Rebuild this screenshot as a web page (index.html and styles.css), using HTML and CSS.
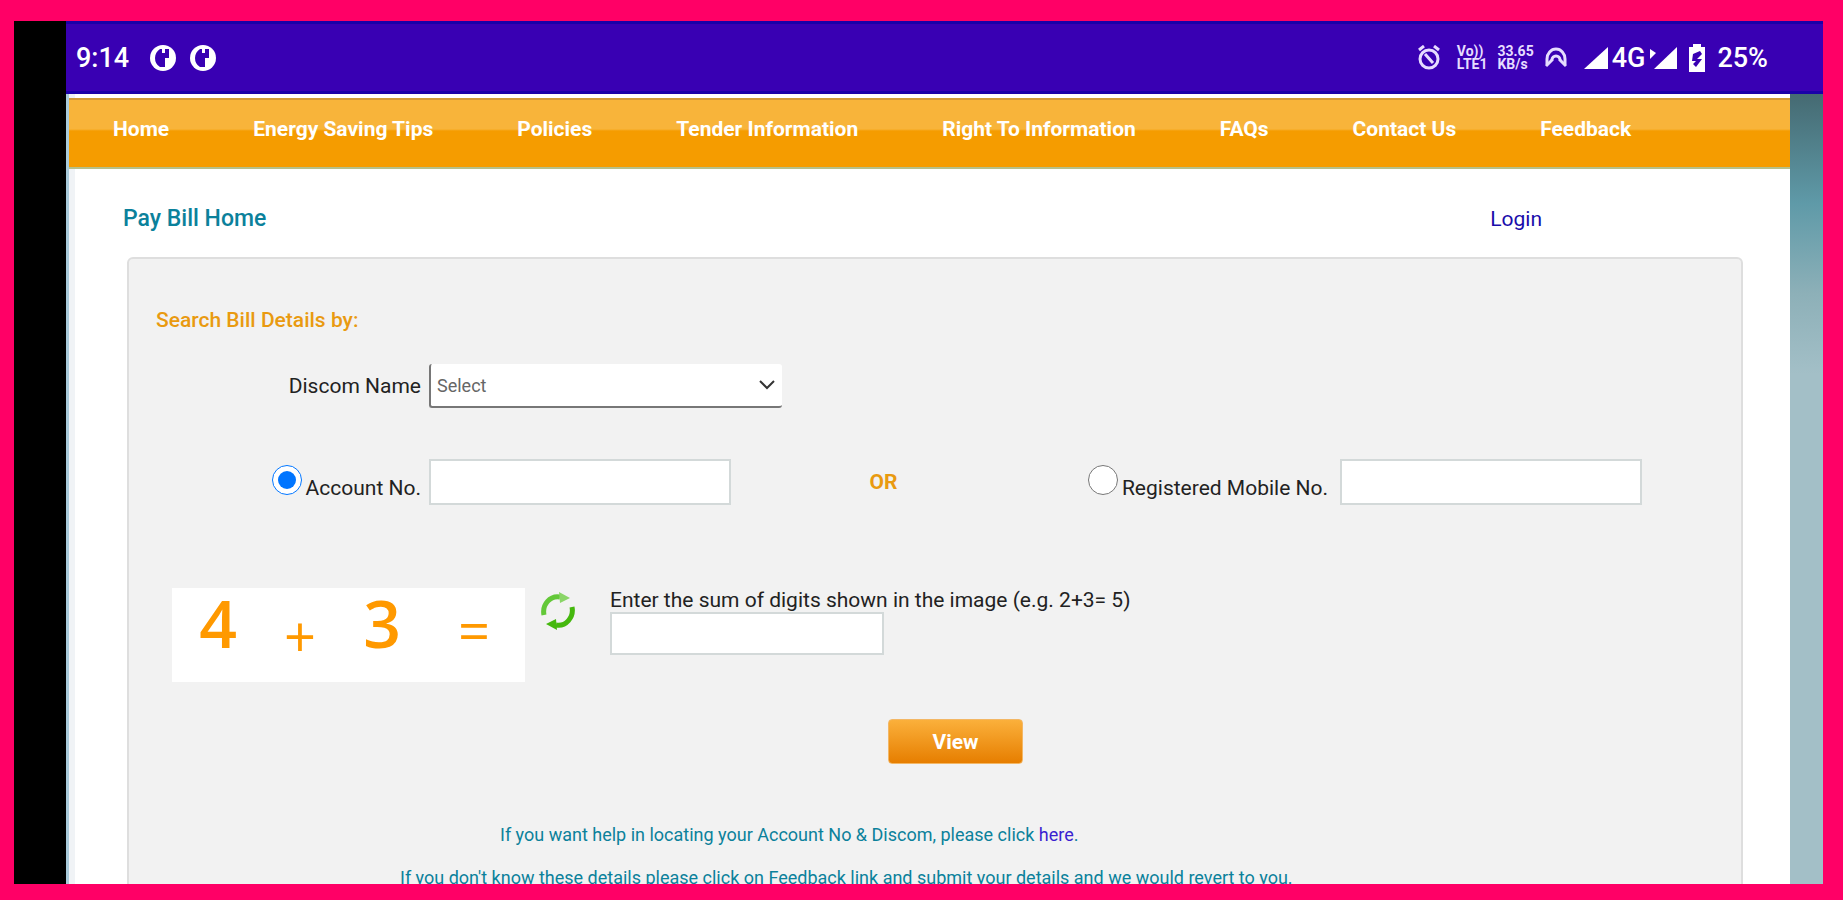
FILE: index.html
```html
<!DOCTYPE html>
<html lang="en">
  <head>
    <meta charset="UTF-8" />
    <meta name="viewport" content="width=device-width, initial-scale=1.0" />
    <title>Pay Bill Home</title>
    <link rel="stylesheet" href="styles.css">
  </head>
  <body>
    <div class="screen">
      <header class="status-bar">
        <div class="status-left">
          <span class="status-text clock">9:14</span>
          <svg class="app-icon" viewBox="0 0 28 28">
            <circle cx="14" cy="14" r="13" fill="#fff" />
            <path d="M11 5h9v9h-4v9h-5a9 10 0 0 1-5-9c0-4 2-7 5-9z" fill="#3900b3" />
            <path d="M13 4h3v5h-3z" fill="#fff" />
          </svg>
          <svg class="app-icon" viewBox="0 0 28 28">
            <circle cx="14" cy="14" r="13" fill="#fff" />
            <path d="M11 5h9v9h-4v9h-5a9 10 0 0 1-5-9c0-4 2-7 5-9z" fill="#3900b3" />
            <path d="M13 4h3v5h-3z" fill="#fff" />
          </svg>
        </div>
        <div class="status-right">
          <svg class="alarm" width="24" height="26" viewBox="0 0 24 26" fill="none" stroke="#e6dcff" stroke-width="3">
            <circle cx="12" cy="14" r="9" />
            <path d="M8 9l8 9M2 5l5-4M22 5l-5-4" />
          </svg>
          <span class="tiny">Vo))<br>LTE1</span>
          <span class="tiny">33.65<br>KB/s</span>
          <svg class="hotspot" width="24" height="24" viewBox="0 0 24 24" fill="none" stroke="#e6dcff" stroke-width="3">
            <path d="M3 18v-5a9 10 0 0 1 18 0v5M8 15v-1a4 4 0 0 1 8 0v1" />
            <path d="M2 20l6-6M22 20l-6-6" />
          </svg>
          <svg width="24" height="24" viewBox="0 0 24 24"><path d="M24 1v22H0z" fill="#fff" /></svg>
          <span class="status-text network">4G</span>
          <svg class="signal" width="28" height="24" viewBox="0 0 28 24" fill="#fff">
            <path d="M28 1v22H5z" />
            <path d="M1 3l6 4-6 6z" />
          </svg>
          <svg class="battery" width="20" height="30" viewBox="0 0 20 30">
            <path d="M6 1h8v3h4v25H2V4h4z" fill="#fff" />
            <path d="M6 11l7-3 2 3-5 5h5l-6 8-3-3 3-3H5z" fill="#3900b3" />
          </svg>
          <span class="status-text">25%</span>
        </div>
      </header>

      <div class="viewport">
        <div class="page">
          <nav class="main-nav">
            <a href="#">Home</a>
            <a href="#">Energy Saving Tips</a>
            <a href="#">Policies</a>
            <a href="#">Tender Information</a>
            <a href="#">Right To Information</a>
            <a href="#">FAQs</a>
            <a href="#">Contact Us</a>
            <a href="#">Feedback</a>
          </nav>

          <div class="title-row">
            <h1>Pay Bill Home</h1>
            <a href="#" class="login">Login</a>
          </div>

          <form class="panel">
            <h2>Search Bill Details by:</h2>

            <div class="field">
              <label class="field-label" for="discom">Discom Name</label>
              <select id="discom" class="discom">
                <option>Select</option>
              </select>
            </div>

            <div class="search-row">
              <div class="field">
                <div class="field-label">
                  <input type="radio" name="search-by" id="by-account" checked />
                  <label for="by-account">Account No.</label>
                </div>
                <input type="text" class="text-box" aria-label="Account No." />
              </div>
              <span class="or">OR</span>
              <div class="field field-mobile">
                <div class="field-label">
                  <input type="radio" name="search-by" id="by-mobile" />
                  <label for="by-mobile">Registered Mobile No.</label>
                </div>
                <input type="text" class="text-box" aria-label="Registered Mobile No." />
              </div>
            </div>

            <div class="captcha-row">
              <div class="captcha">
                <span class="digit">4</span>
                <span class="sign">+</span>
                <span class="digit">3</span>
                <span class="sign equals">=</span>
              </div>
              <button type="button" class="refresh" aria-label="Refresh">
                <svg width="36" height="38" viewBox="0 0 36 38" fill="none" stroke-width="5">
                  <path d="M4 23A14 15 0 0 1 20 5" stroke="#63c838" />
                  <path d="M19 0l11 6-10 5z" fill="#8ad567" />
                  <path d="M32 15A14 15 0 0 1 16 33" stroke="#45b80e" />
                  <path d="M17 38L6 32l10-5z" fill="#45b80e" />
                </svg>
              </button>
              <div class="answer">
                <label for="sum">Enter the sum of digits shown in the image (e.g. 2+3= 5)</label>
                <input type="text" id="sum" class="text-box" />
              </div>
            </div>

            <button type="button" class="view-btn">View</button>

            <p class="help help-locate">If you want help in locating your Account No &amp; Discom, please click <a href="#">here</a>.</p>
            <p class="help">If you don't know these details please click on Feedback link and submit your details and we would revert to you.</p>
          </form>
        </div>
      </div>
    </div>
  </body>
</html>
```

FILE: styles.css
```css
* {
  box-sizing: border-box;
}

body {
  margin: 0;
  height: 100vh;
  padding: 21px 20px 16px 14px;
  background-color: #ff0066;
  font-family: Roboto, "Liberation Sans", sans-serif;
  font-size: 21px;
  line-height: 24px;
  color: #222;
  overflow: hidden;
}

h1,
h2,
p {
  margin: 0;
}

a {
  text-decoration: none;
}

.screen {
  height: 100%;
  display: flex;
  flex-direction: column;
  border-left: 52px solid #000;
  overflow: hidden;
}

/* phone status bar */
.status-bar {
  flex: none;
  height: 73px;
  padding: 0 55px 0 10px;
  display: flex;
  justify-content: space-between;
  align-items: center;
  background-color: #3900b3;
  border-top: 3px solid #1a00a8;
  border-bottom: 3px solid #1a00a8;
}

.status-left,
.status-right {
  display: flex;
  align-items: center;
}

.status-text {
  color: #fff;
  font-size: 27px;
  font-weight: 500;
  line-height: 32px;
}

.clock {
  margin-right: 20px;
}

.app-icon {
  width: 28px;
  height: 28px;
  margin-right: 12px;
}

.alarm {
  margin-right: 16px;
}

.tiny {
  margin-right: 10px;
  color: #e6dcff;
  font-size: 14px;
  font-weight: 700;
  line-height: 13px;
}

.hotspot {
  margin-right: 16px;
}

.network {
  margin: 0 4px;
}

.signal {
  margin-right: 10px;
}

.battery {
  margin-right: 10px;
}

/* web page */
.viewport {
  flex: 1;
  min-height: 0;
  padding-right: 33px;
  background: linear-gradient(#456a72, #5f9aa8 110px, #8db0b8 200px, #a3bfc7 280px);
}

.page {
  height: 100%;
  padding-top: 4px;
  background-color: #fff;
  border-left: 3px solid #a9cbdb;
  box-shadow: inset 6px 0 #f0f3f6;
}

.main-nav {
  height: 71px;
  padding: 17px 44px 0;
  display: flex;
  gap: 84px;
  background: linear-gradient(#f8b43a 29px, #f59c00 31px);
  border-top: 2px solid #d09a38;
  border-bottom: 2px solid #b5c08a;
}

.main-nav a {
  color: #fff;
  font-weight: 700;
  white-space: nowrap;
}

.title-row {
  padding: 38px 248px 26px 54px;
  display: flex;
  justify-content: space-between;
}

h1 {
  color: #0b819b;
  font-size: 23px;
  font-weight: 500;
}

.login {
  color: #1a0dab;
}

.panel {
  margin: 0 47px 0 58px;
  padding-top: 49px;
  min-height: 640px;
  background-color: #f2f2f2;
  border: 2px solid #dedede;
  border-radius: 6px;
}

h2 {
  margin: 0 0 32px 27px;
  color: #e99a10;
  font-size: 21px;
  font-weight: 500;
}

.field {
  display: flex;
  align-items: center;
  gap: 8px;
}

.field-mobile {
  gap: 12px;
}

.field-label {
  width: 292px;
  display: flex;
  justify-content: flex-end;
  align-items: baseline;
  gap: 4px;
}

input[type="radio"] {
  width: 30px;
  height: 30px;
  margin: 0;
}

.discom {
  width: 353px;
  height: 44px;
  padding: 0 6px;
  appearance: none;
  background: #fff url("data:image/svg+xml,%3Csvg xmlns='http://www.w3.org/2000/svg' width='16' height='10' fill='none' stroke='%23333' stroke-width='2'%3E%3Cpath d='M1 1l7 7 7-7'/%3E%3C/svg%3E") no-repeat right 7px center;
  border: 0;
  border-left: 2px solid #777;
  border-bottom: 2px solid #777;
  border-radius: 3px;
  font-family: inherit;
  font-size: 18px;
  color: #666;
}

.text-box {
  width: 302px;
  height: 46px;
  background-color: #fff;
  border: 2px solid #d3d9d9;
}

.search-row {
  margin-top: 51px;
  padding-right: 99px;
  display: flex;
  justify-content: space-between;
  align-items: center;
}

.or {
  color: #e99a10;
  font-weight: 700;
}

.captcha-row {
  margin: 83px 0 37px 43px;
  display: flex;
  align-items: flex-start;
}

.captcha {
  width: 353px;
  height: 94px;
  padding-left: 5px;
  display: grid;
  grid-template-columns: 82px 82px 82px 1fr;
  grid-template-rows: 68px;
  justify-items: center;
  align-items: center;
  background-color: #fff;
  color: #ff9900;
  font-family: "Open Sans", "Noto Sans", sans-serif;
}

.digit {
  font-size: 66px;
  font-weight: 600;
  line-height: 56px;
}

.sign {
  padding-top: 26px;
  font-size: 56px;
  line-height: 56px;
}

.equals {
  padding-top: 14px;
}

.refresh {
  margin: 4px 34px 0 15px;
  padding: 0;
  height: 38px;
  background: none;
  border: none;
  cursor: pointer;
}

.answer {
  display: flex;
  flex-direction: column;
}

.answer .text-box {
  width: 274px;
  height: 43px;
}

.view-btn {
  display: block;
  width: 135px;
  height: 45px;
  margin-left: 759px;
  background: linear-gradient(#fbb03b, #e67e00);
  border: 1px solid #f3b765;
  border-radius: 4px;
  color: #fff;
  font-family: inherit;
  font-size: 21px;
  font-weight: 700;
  cursor: pointer;
}

.help {
  margin: 19px 0 0 271px;
  color: #0b819b;
  font-size: 18px;
  white-space: nowrap;
}

.help-locate {
  margin: 59px 0 0 371px;
}

.help a {
  color: #3a1fd0;
}
```
